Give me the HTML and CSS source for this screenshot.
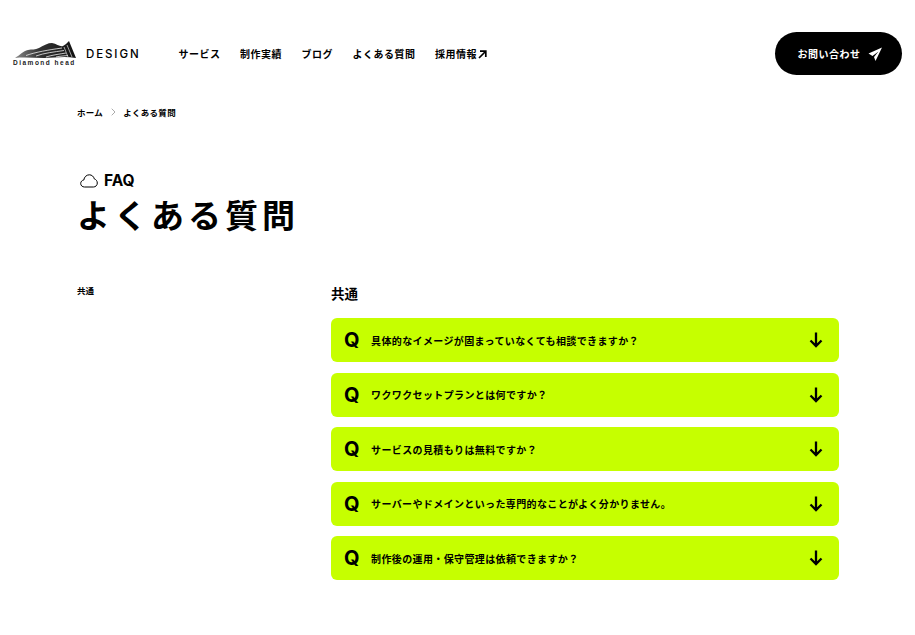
FILE: index.html
```html
<!DOCTYPE html>
<html lang="ja">
<head>
  <meta charset="UTF-8"/>
  <meta name="viewport" content="width=device-width,initial-scale=1"/>
  <title>よくある質問 – Diamond head DESIGN</title>
  <link rel="stylesheet" href="styles.css">
</head>
<body>
  <header class="header">
    <a class="logo" href="#">
      <span class="logo-mark">
        <svg width="62" height="19" viewBox="0 0 62 19">
          <defs>
            <linearGradient id="ridge" x1="0" x2="1" y1="0" y2="0">
              <stop offset="0" stop-color="#888"/>
              <stop offset=".4" stop-color="#333"/>
              <stop offset="1" stop-color="#111"/>
            </linearGradient>
          </defs>
          <path d="M1 18 C6 15 9 11 14 10 C18 9 21 10 25 8 C30 5 34 3 38 3 C43 4 46 7 49 6 C51 5 53 3 55 1 L62 18 C50 16 40 18 30 18 C20 18 10 17 1 18 Z" fill="url(#ridge)"/>
          <path d="M12 15.5 C22 12 34 10 48 8 M22 16 C30 13 40 12 50 10.5 M32 17 C38 15 46 14 52 13 M42 17 C46 16 50 16 54 15.5" fill="none" stroke="#eee" stroke-width=".8"/>
          <path d="M50 7 L54 17 M53 5 L58 17" fill="none" stroke="#ddd" stroke-width=".7"/>
        </svg>
        <span class="logo-name">Diamond head</span>
      </span>
      <span class="logo-word">DESIGN</span>
    </a>
    <nav class="nav">
      <a href="#">サービス</a>
      <a href="#">制作実績</a>
      <a href="#">ブログ</a>
      <a href="#">よくある質問</a>
      <a class="nav-ext" href="#">採用情報
        <svg width="9" height="9" viewBox="0 0 9 9"><path d="M1 8 L7.5 1.5 M2 1.2 H7.8 V7" fill="none" stroke="#000" stroke-width="1.7"/></svg>
      </a>
    </nav>
    <a class="contact" href="#">お問い合わせ
      <svg width="14" height="14" viewBox="0 0 14 14"><path d="M14 .5 L.5 6.5 L4.5 9 L10.5 4.5 L6 10 L7.5 14 Z" fill="#fff"/></svg>
    </a>
  </header>

  <main class="main">
    <ol class="crumbs">
      <li>ホーム</li>
      <li class="crumb-sep">
        <svg width="5" height="8" viewBox="0 0 5 8"><path d="M.7.7 4 4 .7 7.3" fill="none" stroke="#aaa" stroke-width="1"/></svg>
      </li>
      <li>よくある質問</li>
    </ol>

    <div class="page-title">
      <p class="eyebrow">
        <svg width="18" height="14" viewBox="0 0 18 14"><path d="M4.5 13 C2.2 13 .7 11.4 .7 9.5 C.7 7.6 2.1 6.2 3.8 6 C4.2 3 6.5 .8 9.3 .8 C11.8 .8 13.7 2.5 14.3 4.9 C16 5.4 17.3 7 17.3 9 C17.3 11.3 15.6 13 13.4 13 Z" fill="none" stroke="#000" stroke-width="1"/></svg>
        FAQ
      </p>
      <h1>よくある質問</h1>
    </div>

    <div class="faq">
      <aside class="side">共通</aside>
      <section class="list">
        <h2>共通</h2>
        <div class="item"><span class="q">Q</span><span class="text">具体的なイメージが固まっていなくても相談できますか？</span><svg width="14" height="16" viewBox="0 0 14 16"><path d="M7 0.5 V14 M1.5 8.5 L7 14 L12.5 8.5" fill="none" stroke="#000" stroke-width="2.3"/></svg></div>
        <div class="item"><span class="q">Q</span><span class="text">ワクワクセットプランとは何ですか？</span><svg width="14" height="16" viewBox="0 0 14 16"><path d="M7 0.5 V14 M1.5 8.5 L7 14 L12.5 8.5" fill="none" stroke="#000" stroke-width="2.3"/></svg></div>
        <div class="item"><span class="q">Q</span><span class="text">サービスの見積もりは無料ですか？</span><svg width="14" height="16" viewBox="0 0 14 16"><path d="M7 0.5 V14 M1.5 8.5 L7 14 L12.5 8.5" fill="none" stroke="#000" stroke-width="2.3"/></svg></div>
        <div class="item"><span class="q">Q</span><span class="text">サーバーやドメインといった専門的なことがよく分かりません。</span><svg width="14" height="16" viewBox="0 0 14 16"><path d="M7 0.5 V14 M1.5 8.5 L7 14 L12.5 8.5" fill="none" stroke="#000" stroke-width="2.3"/></svg></div>
        <div class="item"><span class="q">Q</span><span class="text">制作後の運用・保守管理は依頼できますか？</span><svg width="14" height="16" viewBox="0 0 14 16"><path d="M7 0.5 V14 M1.5 8.5 L7 14 L12.5 8.5" fill="none" stroke="#000" stroke-width="2.3"/></svg></div>
      </section>
    </div>
  </main>
</body>
</html>
```

FILE: styles.css
```css
*, *::before, *::after { box-sizing: border-box; margin:0; padding:0 }
html, body { height:100%; overflow:hidden }
body {
  font-family:'Noto Sans CJK JP','Noto Sans',sans-serif;
  background:#fff;
  color:#000;
}
a { color:inherit; text-decoration:none; }

.header {
  display:flex; align-items:center;
  padding:32px 13px 0;
}
.logo { display:flex; align-items:center; }
.logo-mark { display:flex; flex-direction:column; width:63px; margin-top:-1px; }
.logo-mark svg { display:block; margin-left:1px; }
.logo-name {
  font-family:'Liberation Sans',sans-serif;
  font-size:6.5px; font-weight:700;
  letter-spacing:1.5px;
  line-height:8px;
  white-space:nowrap;
  color:#222;
}
.logo-word {
  margin-left:10px;
  font-family:'Inter',sans-serif;
  font-size:11.5px; font-weight:500;
  letter-spacing:1.9px;
}
.nav {
  display:flex; gap:19.5px;
  margin-left:38px;
  font-size:10px; font-weight:700;
  letter-spacing:.5px;
}
.nav-ext svg { margin-left:-2px; vertical-align:-1px; }
.contact {
  display:flex; align-items:center; justify-content:center; gap:7px;
  width:127px; height:43px;
  margin-left:auto;
  padding-left:2px;
  background:#000; color:#fff;
  border-radius:22px;
  font-size:10px; font-weight:700;
  letter-spacing:.5px;
}

.main { padding:31px 76px 0 77px; }
.crumbs {
  display:flex; align-items:center; gap:7.5px;
  list-style:none;
  font-size:8.5px; font-weight:700;
  letter-spacing:.3px;
  line-height:12px;
}
.crumb-sep { display:flex; }
.page-title { margin-top:53px; }
.eyebrow {
  display:flex; align-items:center; gap:6px;
  padding-left:3px;
  font-family:'Inter',sans-serif;
  font-size:15.5px; font-weight:700;
  line-height:20px;
}
h1 {
  margin-top:4px;
  font-size:33px; font-weight:700;
  letter-spacing:4px;
  line-height:38px;
}

.faq { display:flex; margin-top:48px; }
.side {
  width:254px;
  font-size:8.5px; font-weight:700;
  line-height:12px;
  padding-top:3px;
}
.list { flex:1; display:flex; flex-direction:column; gap:10.5px; padding-top:2px; }
.list h2 {
  font-size:13.5px; font-weight:700;
  line-height:20px;
  margin-bottom:4.5px;
}
.item {
  display:flex; align-items:center;
  height:44px;
  padding:0 16px 0 13px;
  background:#c6ff00;
  border-radius:6px;
}
.q {
  width:27px;
  font-family:'Inter',sans-serif;
  font-size:20px; font-weight:700;
}
.text {
  flex:1;
  font-size:10px; font-weight:700;
  letter-spacing:.38px;
}
```
